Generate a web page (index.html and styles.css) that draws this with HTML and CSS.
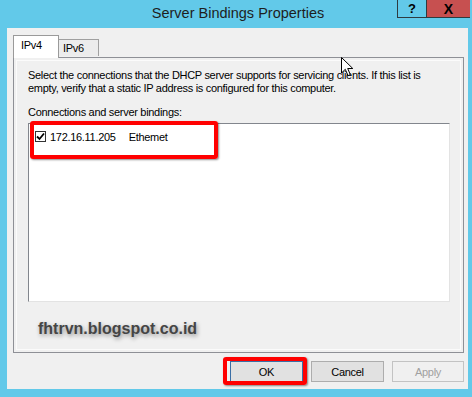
FILE: index.html
```html
<!DOCTYPE html>
<html lang="en">
<head>
  <meta charset="UTF-8">
  <title>Server Bindings Properties</title>
  <link rel="stylesheet" href="styles.css">
</head>
<body>
  <div class="window">
    <!-- Title bar -->
    <div class="titlebar">
      <span class="title">Server Bindings Properties</span>
      <div class="controls">
        <span class="help-btn">?</span>
        <span class="close-btn">X</span>
      </div>
    </div>

    <div class="dialog">
      <div class="tabs">
        <span class="tab active">IPv4</span>
        <span class="tab">IPv6</span>
      </div>

      <div class="tab-panel">
        <p class="desc">Select the connections that the DHCP server supports for servicing clients. If this list is empty, verify that a static IP address is configured for this computer.</p>
        <p class="label">Connections and server bindings:</p>

        <div class="listbox">
          <div class="list-item">
            <span class="checkbox">
              <svg width="9" height="9" viewBox="0 0 9 9"><path d="M1 4.5 L3.5 7 L8 1.5" fill="none" stroke="#000" stroke-width="1.8"/></svg>
            </span>
            <span class="ip">172.16.11.205</span>
            <span class="iface">Ethemet</span>
          </div>
          <div class="highlight item-mark"></div>
        </div>

        <div class="watermark">fhtrvn.blogspot.co.id</div>

        <!-- mouse pointer -->
        <svg class="cursor" width="13" height="20" viewBox="0 0 13 20">
          <path d="M0.5 0.5 L0.5 16 L4.3 12.3 L7 18.6 L9.3 17.6 L6.7 11.5 L11.8 11.5 Z" fill="#fff" stroke="#000" stroke-width="1"/>
        </svg>
      </div>

      <div class="buttons">
        <button class="btn default">OK<span class="highlight ok-mark"></span></button>
        <button class="btn">Cancel</button>
        <button class="btn disabled">Apply</button>
      </div>
    </div>
  </div>
</body>
</html>
```

FILE: styles.css
```css
body {
  margin: 0;
  padding: 0;
  width: 472px;
  height: 397px;
  overflow: hidden;
  background: #62c9e9;
  font-family: 'Liberation Sans', Arial, sans-serif;
  color: #000;
}

.titlebar {
  height: 28px;
  display: grid;
  grid-template-columns: 1fr auto 1fr;
}

.title {
  grid-column: 2;
  font-size: 14.5px;
  line-height: 27px;
  color: #1e1e1e;
  padding-left: 4px;
}

.controls {
  grid-column: 3;
  justify-self: end;
  align-self: start;
  display: flex;
  margin-right: 2px;
}

.help-btn,
.close-btn {
  height: 18px;
  line-height: 18px;
  text-align: center;
  font-weight: bold;
  font-size: 13px;
  box-sizing: border-box;
  color: #000;
}

.help-btn {
  width: 29px;
  border: 1px solid #2e3b40;
  border-top: none;
  border-right: none;
}

.close-btn {
  width: 44px;
  background: #c75050;
  border-bottom: 1px solid #2e3b40;
  border-left: 1px solid #2e3b40;
  font-size: 14px;
}

.dialog {
  margin: 0 4px 0 7px;
  height: 361px;
  background: #f0f0f0;
  padding: 7px 4px 0 6px;
  box-sizing: border-box;
}

.tabs {
  display: flex;
  align-items: flex-end;
  height: 22px;
  position: relative;
  z-index: 1;
}

.tab {
  font-size: 11px;
  letter-spacing: -0.3px;
  height: 17px;
  line-height: 17px;
  padding: 0 13px 0 4px;
  border: 1px solid #a0a0a0;
  border-bottom: none;
  background: #ececec;
  margin-bottom: 1px;
  box-sizing: border-box;
  width: 40px;
}

.tab.active {
  width: 46px;
  height: 23px;
  line-height: 18px;
  padding-left: 7px;
  margin-bottom: -1px;
  background: #fff;
  border-color: #9a9a9a;
}

.tab.active + .tab {
  border-left: none;
}

.tab-panel {
  position: relative;
  height: 296px;
  border: 1px solid #8e9096;
  box-shadow: inset 0 0 0 2px #f0f0f0, inset 0 0 0 3px #fbfbfb;
  padding: 11px 15px 0 14px;
  box-sizing: border-box;
  font-size: 11px;
  letter-spacing: -0.3px;
}

.tab-panel p {
  margin: 0;
  line-height: 13px;
}

.desc {
  width: 410px;
  margin-bottom: 11px !important;
}

.label {
  margin-bottom: 4px !important;
}

.listbox {
  position: relative;
  width: 422px;
  height: 179px;
  background: #fff;
  border: 1px solid #82868d;
  border-right-color: #e3e3e3;
  border-bottom-color: #e3e3e3;
  box-sizing: border-box;
}

.list-item {
  display: flex;
  align-items: center;
  height: 13px;
  margin-top: 6px;
  padding-left: 6px;
}

.checkbox {
  width: 11px;
  height: 11px;
  border: 1px solid #333;
  box-sizing: border-box;
  display: flex;
  align-items: center;
  justify-content: center;
  margin-right: 4px;
}

.iface {
  margin-left: 13px;
}

.highlight {
  position: absolute;
  border: 4px solid #f00;
  border-radius: 3px;
  box-shadow: 1px 1px 2px rgba(0, 0, 0, 0.45);
  box-sizing: border-box;
}

.item-mark {
  left: 1px;
  top: -3px;
  width: 188px;
  height: 38px;
}

.watermark {
  margin: 18px 0 0 10px;
  font-size: 16px;
  font-weight: bold;
  letter-spacing: 0;
  color: #454545;
  text-shadow: 1px 2px 4px rgba(0, 0, 0, 0.4);
}

.cursor {
  position: absolute;
  left: 327px;
  top: -1px;
}

.buttons {
  display: flex;
  justify-content: flex-end;
  gap: 8px;
  margin-top: 8px;
}

.btn {
  position: relative;
  width: 73px;
  height: 21px;
  padding: 0;
  font-family: 'Liberation Sans', Arial, sans-serif;
  font-size: 11px;
  letter-spacing: -0.3px;
  background: #e1e1e1;
  border: 1px solid #adadad;
  color: #000;
}

.btn.default {
  border-color: #3a6ea5;
}

.btn.disabled {
  width: 72px;
  background: #f0f0f0;
  border-color: #c3c3c3;
  color: #a0a0a0;
}

.ok-mark {
  left: -8px;
  top: -5px;
  width: 84px;
  height: 28px;
}
```
